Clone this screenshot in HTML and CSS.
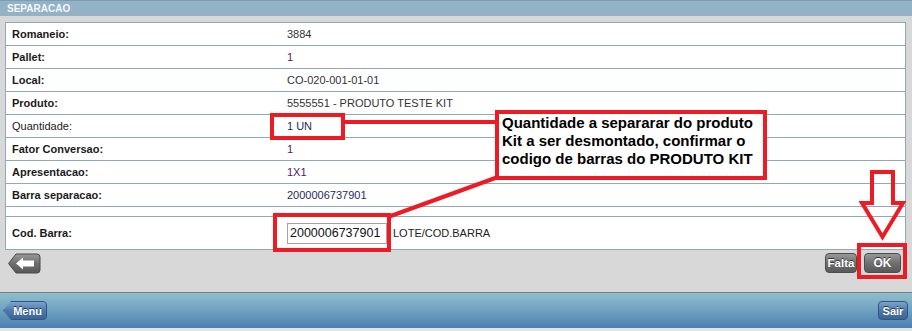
FILE: index.html
```html
<!DOCTYPE html>
<html lang="pt">
<head>
    <meta charset="UTF-8">
    <title>Separacao</title>
    <link rel="stylesheet" href="styles.css">
</head>
<body>
    <div class="page">
        <div class="panel-title">SEPARACAO</div>
        <div class="content">
            <div class="info">
                <div class="row"><div class="label">Romaneio:</div><div class="value">3884</div></div>
                <div class="row"><div class="label">Pallet:</div><div class="value purple">1</div></div>
                <div class="row"><div class="label">Local:</div><div class="value">CO-020-001-01-01</div></div>
                <div class="row"><div class="label">Produto:</div><div class="value">5555551 - PRODUTO TESTE KIT</div></div>
                <div class="row"><div class="label light">Quantidade:</div><div class="value navy">1 UN</div></div>
                <div class="row"><div class="label">Fator Conversao:</div><div class="value purple">1</div></div>
                <div class="row"><div class="label">Apresentacao:</div><div class="value purple">1X1</div></div>
                <div class="row"><div class="label">Barra separacao:</div><div class="value navy">2000006737901</div></div>
                <div class="row spacer"></div>
                <div class="row tall">
                    <div class="label">Cod. Barra:</div>
                    <div class="value">
                        <input class="barcode" type="text" value="2000006737901">
                        <span class="hint">LOTE/COD.BARRA</span>
                    </div>
                </div>
            </div>
            <div class="actions">
                <button class="btn-back" type="button">
                    <svg width="33" height="21" viewBox="0 0 33 21">
                        <defs>
                            <linearGradient id="gb" x1="0" y1="0" x2="0" y2="1">
                                <stop offset="0" stop-color="#9a9a9a"/>
                                <stop offset="0.5" stop-color="#6e6e6e"/>
                                <stop offset="1" stop-color="#585858"/>
                            </linearGradient>
                        </defs>
                        <path d="M0.5 10.5 L8 1 H29 Q32 1 32 4 V17 Q32 20 29 20 H8 Z" fill="url(#gb)" stroke="#4a4a4a"/>
                        <path d="M8 10.5 L15 4.5 V7.5 H26 V13.5 H15 V16.5 Z" fill="#fff"/>
                    </svg>
                </button>
                <div class="actions-right">
                    <button class="btn-dark btn-falta" type="button">Falta</button>
                    <button class="btn-dark btn-ok" type="button">OK</button>
                </div>
            </div>
        </div>
        <div class="footer">
            <button class="btn-menu" type="button">Menu</button>
            <button class="btn-blue" type="button">Sair</button>
        </div>
    </div>

    <!-- marcacoes do tutorial -->
    <svg class="marks" width="912" height="331" viewBox="0 0 912 331">
        <g fill="none" stroke="#ed1c24" stroke-width="4">
            <rect x="272" y="115" width="71" height="23"/>
            <line x1="343" y1="122" x2="497" y2="122"/>
            <line x1="498" y1="177" x2="388" y2="217"/>
            <rect x="275" y="215" width="114" height="35"/>
            <rect x="859" y="245" width="46" height="32"/>
            <polygon points="872,172 893,172 893,203 903,203 882.5,237 862,203 872,203"/>
        </g>
    </svg>
    <div class="callout">Quantidade a separarar do produto Kit a ser desmontado, confirmar o codigo de barras do PRODUTO KIT</div>
</body>
</html>
```

FILE: styles.css
```css
body {
    margin: 0;
    background: #e4e4e4;
    font-family: "Liberation Sans", Arial, sans-serif;
    font-size: 11px;
    color: #222;
}

.page {
    width: 912px;
    height: 328px;
    background: #d8d8d8;
    display: flex;
    flex-direction: column;
}

.panel-title {
    height: 15px;
    border-top: 1px solid #7f9db2;
    background: #93b2c6;
    color: #f4f7fa;
    font-size: 10px;
    font-weight: bold;
    line-height: 15px;
    padding-left: 7px;
}

.content {
    padding: 6px 6px 0 5px;
    border-bottom: 1px solid #7c7c7c;
    height: 277px;
    box-sizing: border-box;
    display: flex;
    flex-direction: column;
}

.info {
    background: #fff;
    border: 1px solid #8eaabf;
}

.row {
    display: flex;
    align-items: center;
    height: 22px;
    border-bottom: 1px solid #8eaabf;
}

.row.spacer {
    height: 9px;
}

.row.tall {
    height: 32px;
    border-bottom: none;
}

.label {
    width: 275px;
    padding-left: 6px;
    font-weight: bold;
    color: #1a1a1a;
}

.label.light {
    font-weight: normal;
}

.value {
    color: #333;
    display: flex;
    align-items: center;
}

.value.purple {
    color: #4e1a66;
}

.value.navy {
    color: #1f2b5c;
}

.barcode {
    width: 100px;
    height: 21px;
    box-sizing: border-box;
    margin: 0;
    padding: 0 2px;
    border: 1px solid #a3a3a3;
    font-family: "Liberation Sans", Arial, sans-serif;
    font-size: 12.5px;
    color: #111;
}

.hint {
    margin-left: 6px;
    color: #222;
}

.actions {
    display: flex;
    justify-content: space-between;
    padding: 3px 5px 0 3px;
}

.actions-right {
    display: flex;
    gap: 7px;
}

.btn-back {
    border: none;
    background: none;
    padding: 0;
    height: 21px;
    display: block;
}

.btn-dark {
    height: 20px;
    padding: 0;
    border: 1px solid #4d4d4d;
    border-radius: 4px;
    background: linear-gradient(#999, #707070 50%, #595959);
    color: #fff;
    font-family: "Liberation Sans", Arial, sans-serif;
    font-size: 12px;
    font-weight: bold;
    text-shadow: 0 -1px 0 #333;
}

.btn-falta {
    width: 32px;
    font-size: 11.5px;
}

.btn-ok {
    width: 37px;
}

.footer {
    flex: 1;
    background: linear-gradient(#8ec0ce, #6fa0c0 50%, #4b80b1);
    display: flex;
    justify-content: space-between;
    align-items: center;
    padding: 0 4px 0 3px;
}

.btn-menu,
.btn-blue {
    height: 19px;
    border: 1px solid #2f5680;
    background: linear-gradient(#7ea4cc, #4d78a8 50%, #3a6596);
    color: #fff;
    font-family: "Liberation Sans", Arial, sans-serif;
    font-size: 11px;
    font-weight: bold;
    text-shadow: 0 -1px 0 #1d3553;
    padding: 0 4px;
}

.btn-menu {
    padding-left: 9px;
    border-radius: 4px;
    clip-path: polygon(0 50%, 8px 0, 100% 0, 100% 100%, 8px 100%);
    width: 44px;
}

.btn-blue {
    border-radius: 4px;
    width: 30px;
    padding: 0;
}

.marks {
    position: absolute;
    left: 0;
    top: 0;
    pointer-events: none;
}

.callout {
    position: absolute;
    left: 495px;
    top: 110px;
    width: 272px;
    height: 70px;
    box-sizing: border-box;
    border: 4px solid #ed1c24;
    background: #fff;
    padding: 0 0 0 3px;
    font-size: 15px;
    font-weight: bold;
    line-height: 18px;
    color: #000;
}
```
